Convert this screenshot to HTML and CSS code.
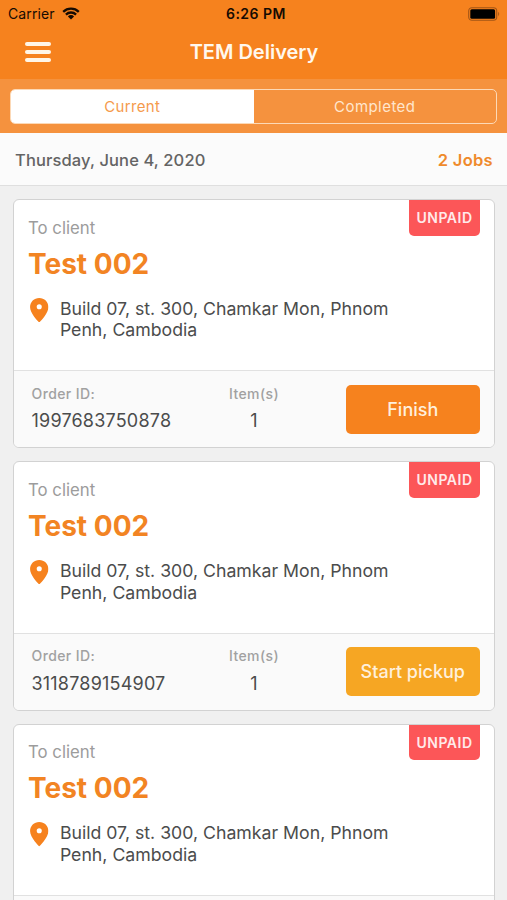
FILE: index.html
```html
<!DOCTYPE html>
<html lang="en">
<head>
<meta charset="utf-8">
<title>TEM Delivery</title>
<link rel="stylesheet" href="styles.css">
</head>
<body>
<svg class="defs" aria-hidden="true">
  <symbol id="pin" viewBox="0 0 18 24"><path fill-rule="evenodd" d="M9 0C4 0 0 3.9 0 8.8C0 15.3 9 24 9 24S18 15.3 18 8.8C18 3.9 14 0 9 0ZM9 6a2.5 2.5 0 1 1 0 5a2.5 2.5 0 0 1 0-5Z"/></symbol>
</svg>
<header class="header">
  <div class="status">
    <div class="carrier"><span>Carrier</span>
      <svg class="wifi" viewBox="0 0 18 13"><path d="M1.2 4.8a11.2 11.2 0 0 1 15.6 0M3.9 7.6a7.3 7.3 0 0 1 10.2 0" fill="none" stroke="currentColor" stroke-width="2.3"/><path d="M9 12.5L5.9 9.4a4.4 4.4 0 0 1 6.2 0Z" fill="currentColor"/></svg>
    </div>
    <span class="time">6:26 PM</span>
    <svg class="battery" viewBox="0 0 33 14"><rect x=".7" y=".7" width="28" height="12.6" rx="3.2" fill="none" stroke="#a35516" stroke-width="1.1"/><rect x="2.3" y="2.3" width="24.8" height="9.4" rx="1.5"/><path d="M30.2 4.8q2 2.2 0 4.4Z" fill="#a35516"/></svg>
  </div>
  <div class="navbar">
    <button class="menu" aria-label="Menu"><i></i><i></i><i></i></button>
    <h1 class="title">TEM Delivery</h1>
  </div>
</header>
<nav class="tabs">
  <div class="segments">
    <span class="segment active"><span class="current">Current</span></span>
    <span class="segment"><span class="completed">Completed</span></span>
  </div>
</nav>
<div class="summary"><span class="date">Thursday, June 4, 2020</span><span class="jobs">2 Jobs</span></div>
<main class="list">
  <article class="card">
    <div class="body">
      <span class="badge">UNPAID</span>
      <p class="label">To client</p>
      <h2 class="name">Test 002</h2>
      <div class="place"><svg class="pin"><use href="#pin"/></svg><p class="address">Build 07, st. 300, Chamkar Mon, Phnom<br>Penh, Cambodia</p></div>
    </div>
    <footer class="foot">
      <div class="order"><p class="key">Order ID:</p><p class="value">1997683750878</p></div>
      <div class="items"><p class="key">Item(s)</p><p class="value">1</p></div>
      <button class="action finish">Finish</button>
    </footer>
  </article>
  <article class="card">
    <div class="body">
      <span class="badge">UNPAID</span>
      <p class="label">To client</p>
      <h2 class="name">Test 002</h2>
      <div class="place"><svg class="pin"><use href="#pin"/></svg><p class="address">Build 07, st. 300, Chamkar Mon, Phnom<br>Penh, Cambodia</p></div>
    </div>
    <footer class="foot">
      <div class="order"><p class="key">Order ID:</p><p class="value">3118789154907</p></div>
      <div class="items"><p class="key">Item(s)</p><p class="value">1</p></div>
      <button class="action pickup">Start pickup</button>
    </footer>
  </article>
  <article class="card">
    <div class="body">
      <span class="badge">UNPAID</span>
      <p class="label">To client</p>
      <h2 class="name">Test 002</h2>
      <div class="place"><svg class="pin"><use href="#pin"/></svg><p class="address">Build 07, st. 300, Chamkar Mon, Phnom<br>Penh, Cambodia</p></div>
    </div>
    <footer class="foot"></footer>
  </article>
</main>
</body>
</html>
```
FILE: styles.css
```css
* { box-sizing: border-box; }
body { margin: 0; height: 900px; overflow: hidden; background: #f0f0f0; color: #4b4c4c; font-family: Inter, "Liberation Sans", sans-serif; display: flex; flex-direction: column; white-space: nowrap; }
p, h1, h2 { margin: 0; }
button { border: 0; padding: 0; font-family: inherit; }
.defs { position: absolute; width: 0; height: 0; }
.header { flex: none; height: 79px; background: #f6821e; }
.status { height: 27px; padding: 0 6px 0 8px; display: grid; grid-template-columns: 1fr auto 1fr; align-items: center; color: #160b02; font-size: 14px; line-height: 27px; }
.carrier { display: flex; align-items: center; gap: 7px; letter-spacing: .1px; }
.wifi { width: 18px; height: 13px; }
.time { font-weight: 600; letter-spacing: .5px; padding-left: 3px; }
.battery { width: 33px; height: 14px; justify-self: end; }
.navbar { height: 50px; padding: 0 25px; display: grid; grid-template-columns: 26px 1fr 26px; align-items: center; }
.menu { background: none; display: flex; flex-direction: column; gap: 4px; }
.menu i { height: 4px; border-radius: 2px; background: #fff6e8; }
.title { padding-left: 1px; color: #fff8ee; font-size: 20px; line-height: 26px; font-weight: 600; text-align: center; }
.tabs { flex: none; height: 54px; padding: 10px 10px 9px; background: #f5923e; }
.segments { height: 35px; border: 1px solid #fcd9b7; border-radius: 5px; display: flex; overflow: hidden; }
.segment { flex: 1; display: flex; align-items: center; justify-content: center; font-size: 15px; color: #ffe6cd; letter-spacing: .35px; }
.segment.active { background: #fff; color: #f59a4c; }
.completed { letter-spacing: .45px; }
.summary { flex: none; height: 53px; padding: 0 14px 0 15px; border-bottom: 1px solid #dfdfdf; background: #fbfbfb; display: flex; align-items: center; justify-content: space-between; font-size: 16.5px; line-height: 22px; }
.date { padding-top: 1px; font-weight: 500; letter-spacing: .12px; color: #646464; }
.jobs { padding-top: 1px; font-weight: 600; letter-spacing: .3px; color: #ef8a2c; }
.list { padding: 13px 12px 0 13px; display: flex; flex-direction: column; gap: 13px; }
.card { flex: none; height: 249.3px; border: 1px solid #d2d2d2; border-radius: 6px; background: #fff; overflow: hidden; display: flex; flex-direction: column; }
.body { position: relative; height: 170.4px; padding: 16.6px 14px 0; }
.badge { position: absolute; top: 0; right: 14px; width: 71px; height: 35.5px; border-radius: 0 0 5px 5px; background: #fc5658; color: #ffeaea; font-size: 14px; font-weight: 600; letter-spacing: .5px; line-height: 35px; text-align: center; }
.label { font-size: 16.8px; line-height: 22px; color: #9c9c9c; }
.name { margin-top: 7px; font-size: 28px; line-height: 36px; font-weight: 700; color: #f28423; }
.place { margin-top: 16px; padding-left: 2px; display: flex; gap: 11px; align-items: flex-start; }
.pin { width: 18.5px; height: 24.5px; fill: #f6821e; }
.address { margin-left: .4px; font-size: 17.7px; line-height: 21.7px; }
.foot { flex: 1; border-top: 1px solid #e1e1e1; background: #fafafa; padding: 13.4px 14px 0 17.5px; display: flex; align-items: flex-start; }
.order { width: 182px; }
.items { width: 81px; text-align: center; }
.key { font-size: 14px; line-height: 18px; color: #a1a1a1; font-weight: 500; letter-spacing: .4px; }
.value { margin-top: 7.6px; font-size: 18px; line-height: 22px; letter-spacing: .2px; }
.action { width: 134.5px; height: 49px; margin-left: auto; border-radius: 5px; color: #fff0dd; font-size: 18px; font-weight: 500; }
.finish { background: #f6821e; }
.pickup { background: #f6a623; }
```
